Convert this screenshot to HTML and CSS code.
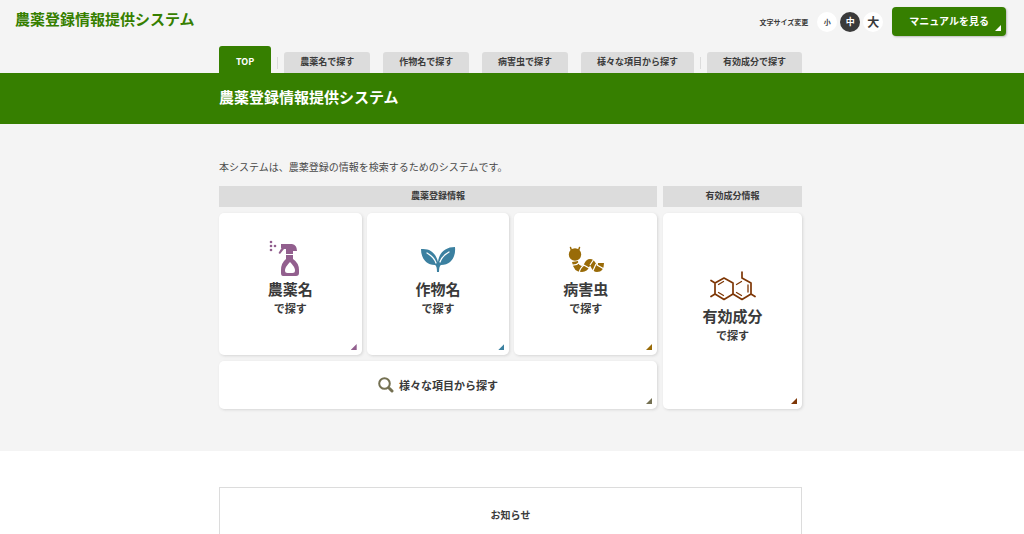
FILE: index.html
```html
<!DOCTYPE html>
<html lang="ja">
<head>
<meta charset="utf-8">
<meta name="viewport" content="width=device-width, initial-scale=1">
<title>農薬登録情報提供システム</title>
<link rel="stylesheet" href="styles.css">
</head>
<body>
<header class="header">
  <div class="header-bar">
    <a class="logo" href="#">農薬登録情報提供システム</a>
    <div class="tools">
      <span class="size-label" id="size-label">文字サイズ変更</span>
      <div class="sizes" role="group" aria-labelledby="size-label">
        <button class="size size-small" type="button">小</button>
        <button class="size size-medium" type="button" aria-pressed="true">中</button>
        <button class="size size-large" type="button">大</button>
      </div>
      <a class="manual corner" href="#">マニュアルを見る</a>
    </div>
  </div>
  <nav class="gutter">
    <ul class="tabs container">
      <li><a class="tab tab-current" href="#" aria-current="page">TOP</a></li>
      <li class="divided"><a class="tab" href="#">農薬名で探す</a></li>
      <li><a class="tab" href="#">作物名で探す</a></li>
      <li><a class="tab" href="#">病害虫で探す</a></li>
      <li><a class="tab" href="#">様々な項目から探す</a></li>
      <li class="divided"><a class="tab" href="#">有効成分で探す</a></li>
    </ul>
  </nav>
</header>

<div class="band gutter">
  <h1 class="container band-title">農薬登録情報提供システム</h1>
</div>

<main>
  <section class="search gutter">
    <div class="container">
      <p class="intro">本システムは、農薬登録の情報を検索するためのシステムです。</p>
      <div class="groups">
        <section class="group">
          <h2 class="group-title">農薬登録情報</h2>
          <div class="cards">
            <a class="card corner purple" href="#">
              <svg class="icon" width="42" height="36" viewBox="0 0 42 36" fill="currentColor" aria-hidden="true">
                <circle cx="2" cy="2" r="1.300"/><circle cx="2" cy="6" r="1.300"/><circle cx="2" cy="10" r="1.300"/><circle cx="6" cy="6" r="1.300"/>
                <path d="M12 4h11q5 1 5 7h-4v3h-7v-5h-2l-4 5-1.500-1 3-5h-.5z"/>
                <path fill-rule="evenodd" d="M17 15h7v4q6 4 6 11v3q0 3-3 3H14q-2 0-2-3v-3q0-7 5-11zM21 22q-5 5-5 8.500q0 2.500 2.500 2.500h5q2.500 0 2.500-2.500q0-3.500-5-8.500z"/>
              </svg>
              <span class="card-name">農薬名</span><span class="card-sub">で探す</span>
            </a>
            <a class="card corner blue" href="#">
              <svg class="icon" width="36" height="36" viewBox="0 0 36 36" aria-hidden="true">
                <path fill="currentColor" d="M17 32q0-6-2-7C6 25 1 18 1 9c10-1 15 5 17 13C19 13 25 7 35 7c1 10-4 18-14 18q-2 1-2 7z"/>
                <path fill="none" stroke="#fff" stroke-width="1.300" stroke-linecap="round" d="M7 13q7 4 9 10M29 12q-7 4-9 10"/>
              </svg>
              <span class="card-name">作物名</span><span class="card-sub">で探す</span>
            </a>
            <a class="card corner ochre" href="#">
              <svg class="icon" width="36" height="36" viewBox="0 0 36 36" fill="currentColor" aria-hidden="true">
                <circle cx="7" cy="14.500" r="6.200"/>
                <path fill="none" stroke="currentColor" stroke-width="1.500" stroke-linecap="round" d="M3.500 10.500 2.500 7.500M10.500 10.500l1-3"/>
                <path fill="none" stroke="currentColor" stroke-width="6" d="M7 21.500q1 7.500 7 7.500c6 0 4-7 8-7s3 7 7 7q4 0 4-6"/>
                <path fill="none" stroke="#fff" stroke-width="1.200" d="M3 25q5 1 9-3M11 33q1-5 5-8M14 24l7 4M22 25l4-6M24 33l4-9M29 25l7 4"/>
              </svg>
              <span class="card-name">病害虫</span><span class="card-sub">で探す</span>
            </a>
            <a class="card card-wide corner olive" href="#">
              <svg width="16" height="16" viewBox="0 0 16 16" fill="none" stroke="currentColor" aria-hidden="true">
                <circle cx="6.500" cy="6.500" r="5.300" stroke-width="2"/><path stroke-width="3" stroke-linecap="round" d="m11.500 11.500 2.500 2.500"/>
              </svg>
              <span class="card-sub">様々な項目から探す</span>
            </a>
          </div>
        </section>
        <section class="group">
          <h2 class="group-title">有効成分情報</h2>
          <a class="card card-tall corner brown" href="#">
            <svg class="icon-molecule" width="46" height="30" viewBox="0 0 46 30" fill="none" stroke="currentColor" stroke-width="1.700" stroke-linecap="round" stroke-linejoin="round" aria-hidden="true">
              <path d="m14 7 9 5v11l-9 5.500-9-5.500V12zM32 7l9 5v11l-9 5.500-9-5.500V12M32 7V1M5 12 1 9.500M5 23l-4 2.500M41 23l4 2.500"/>
              <path stroke-width="1.300" d="m8.500 13.500 5-3M8.500 21.500l5 3M26.500 13.500l5-3M26.500 21.500l5 3M38 14v7"/>
            </svg>
            <span class="card-name">有効成分</span><span class="card-sub">で探す</span>
          </a>
        </section>
      </div>
    </div>
  </section>

  <section class="news gutter">
    <div class="container news-box">
      <h2 class="news-title">お知らせ</h2>
    </div>
  </section>
</main>
</body>
</html>
```
FILE: styles.css
```css
* {
  box-sizing: border-box;
}

body {
  margin: 0;
  background: #fff;
  color: #3a3a3a;
  font-family: "Noto Sans CJK JP", sans-serif;
  font-size: 10px;
  line-height: 16px;
}

a {
  color: inherit;
  text-decoration: none;
}

h1, h2, p, ul {
  margin: 0;
  padding: 0;
}

.gutter {
  padding-left: 15px;
  padding-right: 18px;
}

.container {
  max-width: 583px;
  margin: 0 auto;
}

.header {
  background: #f4f4f4;
}

.header-bar {
  display: flex;
  justify-content: space-between;
  align-items: flex-start;
  margin-bottom: 0;
  padding: 7px 18px 10px 15px;
}

.logo {
  color: #367f00;
  font-size: 15px;
  font-weight: 700;
  line-height: 24px;
}

.tools {
  display: flex;
  align-items: center;
}

.size-label {
  margin-right: 9px;
  font-size: 7px;
  font-weight: 700;
}

.sizes {
  display: flex;
  gap: 3px;
  margin-right: 9px;
}

.size {
  width: 20px;
  height: 20px;
  padding: 0;
  border: 0;
  border-radius: 50%;
  background: #fff;
  color: inherit;
  font-family: inherit;
  font-weight: 700;
  line-height: 20px;
}

.size-small {
  font-size: 7px;
}

.size-medium {
  background: #3a3a3a;
  color: #fff;
  font-size: 9px;
}

.size-large {
  font-size: 12px;
}

.corner {
  position: relative;
}

.corner::after {
  content: "";
  position: absolute;
  right: 5px;
  bottom: 5px;
  width: 6px;
  height: 6px;
  background: currentColor;
  clip-path: polygon(100% 0, 100% 100%, 0 100%);
}

.manual {
  padding: 6px 17px 7px;
  border-radius: 4px;
  background: #367f00;
  box-shadow: 1px 1px 2px #bbb;
  color: #fff;
  font-weight: 700;
}

.tabs {
  display: flex;
  justify-content: space-between;
  align-items: flex-end;
  list-style: none;
}

.tab {
  display: block;
  padding: 2px 16px 3px;
  border-radius: 3px 3px 0 0;
  background: #dcdcdc;
  font-size: 9px;
  font-weight: 700;
  white-space: nowrap;
}

.tab-current {
  padding: 8px 17px 3px;
  background: #367f00;
  color: #fff;
}

.divided {
  position: relative;
}

.divided::before {
  content: "";
  position: absolute;
  left: -7px;
  top: 5px;
  width: 1px;
  height: 12px;
  background: #dcdcdc;
}

.band {
  padding-top: 12px;
  padding-bottom: 15px;
  background: #367f00;
}

.band-title {
  color: #fff;
  font-size: 15px;
  line-height: 24px;
}

.search {
  padding-top: 35px;
  padding-bottom: 42px;
  background: #f4f4f4;
}

.intro {
  margin-bottom: 11px;
  color: #4a4a4a;
}

.groups {
  display: grid;
  grid-template-columns: 438fr 139fr;
  gap: 6px;
}

.group {
  display: flex;
  flex-direction: column;
  gap: 6px;
}

.group-title {
  padding: 2px 0 3px;
  background: #dcdcdc;
  font-size: 9px;
  text-align: center;
}

.cards {
  display: grid;
  grid-template-columns: repeat(3, 1fr);
  gap: 6px 5px;
}

.card {
  display: flex;
  flex-direction: column;
  align-items: center;
  padding: 27px 0 39px;
  border-radius: 5px;
  background: #fff;
  box-shadow: 1px 1px 3px #d6d6d6;
}

.icon {
  margin-bottom: 2px;
}

.icon-molecule {
  margin-bottom: 4px;
}

.card-name {
  color: #3a3a3a;
  font-size: 15px;
  font-weight: 700;
  line-height: 22px;
}

.card-sub {
  color: #3a3a3a;
  font-size: 11px;
  font-weight: 700;
  line-height: 16px;
}

.card-wide {
  grid-column: 1 / -1;
  flex-direction: row;
  justify-content: center;
  gap: 5px;
  padding: 16px 0;
}

.card-tall {
  flex: 1;
  justify-content: center;
  padding: 0 0 8px;
}

.purple { color: #925f8e; }
.blue { color: #3b80a0; }
.ochre { color: #996b08; }
.olive { color: #747052; }
.brown { color: #7e3706; }

.news {
  padding-top: 36px;
}

.news-box {
  padding: 19px 0 40px;
  border: 1px solid #dcdcdc;
}

.news-title {
  font-size: 10px;
  text-align: center;
}
```
